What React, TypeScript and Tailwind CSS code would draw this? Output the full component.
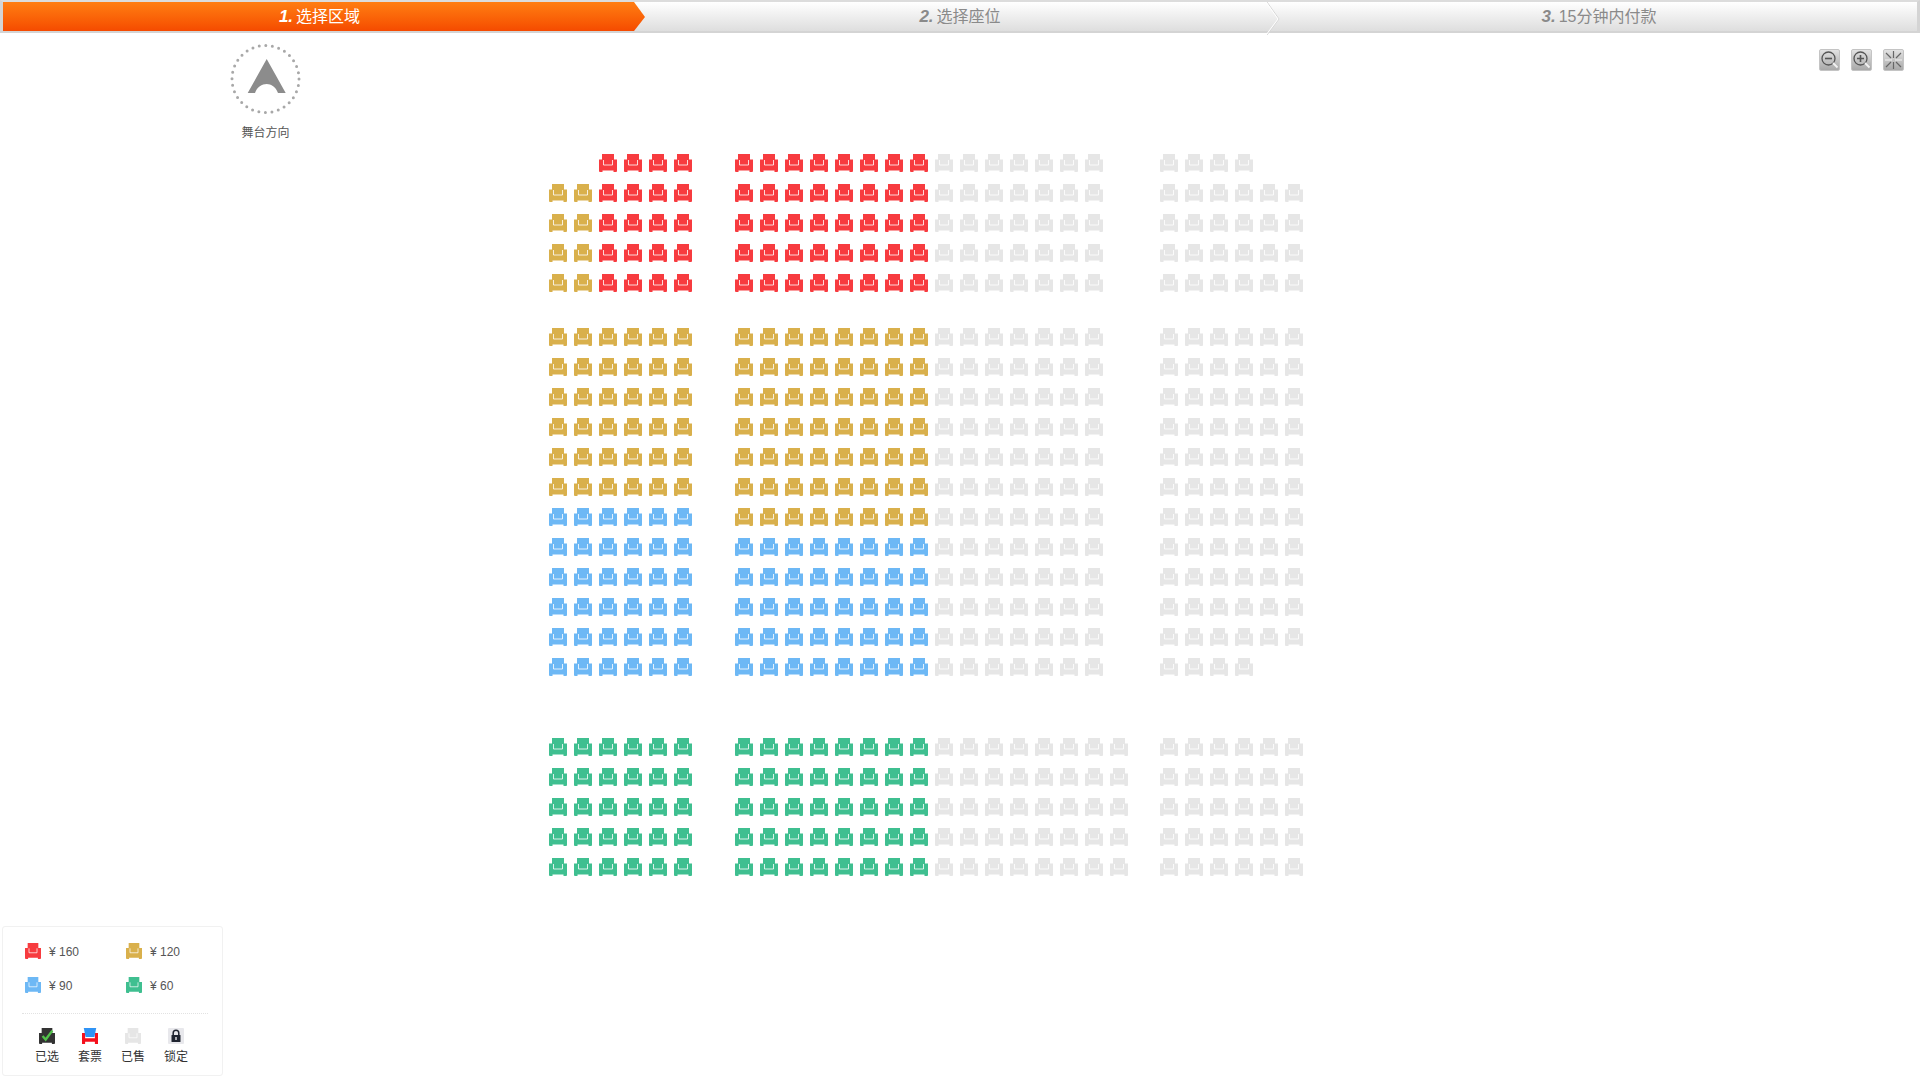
const FONT = 'font-["Liberation_Sans","Noto_Sans_CJK_SC",sans-serif]';

const RED = '#f73b3f';
const GOLD = '#d9b04c';
const BLUE = '#6db8f5';
const GREEN = '#3fbf90';
const SOLD = '#e6e6e6';

const Seat = ({ color, size = 18 }: { color: string; size?: number }) => (
    <svg width={size} height={size} viewBox="0 0 18 18" className="block shrink-0">
        <path d="M3 0h12v5.5h3V17q0 1-1 1h-2.5v-1.5h-11V18H1q-1 0-1-1V5.5h3z" fill={color} />
        <path d="M4.5 6v5h9V6" fill="none" stroke="#fff" strokeOpacity="0.8" strokeWidth="1" />
    </svg>
);

// colours for one row: left block, coloured part of the middle block
type RowSpec = {
    left: string[];
    mid: string;
    midSold?: number;
    right?: number;
};

const six = (c: string) => Array(6).fill(c) as string[];

const firstGroup: RowSpec[] = [
    { left: [RED, RED, RED, RED], mid: RED, right: 4 },
    { left: [GOLD, GOLD, RED, RED, RED, RED], mid: RED },
    { left: [GOLD, GOLD, RED, RED, RED, RED], mid: RED },
    { left: [GOLD, GOLD, RED, RED, RED, RED], mid: RED },
    { left: [GOLD, GOLD, RED, RED, RED, RED], mid: RED },
];

const secondGroup: RowSpec[] = [
    { left: six(GOLD), mid: GOLD },
    { left: six(GOLD), mid: GOLD },
    { left: six(GOLD), mid: GOLD },
    { left: six(GOLD), mid: GOLD },
    { left: six(GOLD), mid: GOLD },
    { left: six(GOLD), mid: GOLD },
    { left: six(BLUE), mid: GOLD },
    { left: six(BLUE), mid: BLUE },
    { left: six(BLUE), mid: BLUE },
    { left: six(BLUE), mid: BLUE },
    { left: six(BLUE), mid: BLUE },
    { left: six(BLUE), mid: BLUE, right: 4 },
];

const thirdGroup: RowSpec[] = Array.from({ length: 5 }, () => ({
    left: six(GREEN),
    mid: GREEN,
    midSold: 8,
}));

const SeatRow = ({ row }: { row: RowSpec }) => (
    <div className="flex">
        <div className="flex justify-end gap-[7px] w-[143px] mr-[43px]">
            {row.left.map((c, i) => <Seat key={i} color={c} />)}
        </div>
        <div className="flex gap-[7px] w-[393px] mr-[32px]">
            {Array.from({ length: 8 }).map((_, i) => <Seat key={i} color={row.mid} />)}
            {Array.from({ length: row.midSold ?? 7 }).map((_, i) => <Seat key={i} color={SOLD} />)}
        </div>
        <div className="flex gap-[7px] w-[143px]">
            {Array.from({ length: row.right ?? 6 }).map((_, i) => <Seat key={i} color={SOLD} />)}
        </div>
    </div>
);

const SeatGroup = ({ rows, className }: { rows: RowSpec[]; className?: string }) => (
    <div className={`flex flex-col gap-3 ${className ?? ''}`}>
        {rows.map((r, i) => <SeatRow key={i} row={r} />)}
    </div>
);

const Chevron = ({ className }: { className: string }) => (
    <svg width="16" height="33" viewBox="0 0 16 33" className={`absolute top-0 ${className}`}>
        <path d="M2 0l12 17L2 33" fill="none" stroke="#d6d6d6" strokeWidth="1" />
        <path d="M1 0l12 17L1 33" fill="none" stroke="#fff" strokeWidth="1" />
    </svg>
);

const Steps = () => (
    <div className="relative flex h-[33px] shrink-0 border-t-2 border-b-2 border-r-[3px] border-l-[3px] border-t-[#dcdcdc] border-b-[#d4d4d4] border-l-[#d4d4d4] border-r-[#d4d4d4] bg-gradient-to-b from-white to-[#dedede]">
        <div className="flex items-center justify-center w-[642px] shrink-0 pr-[9px] pt-px text-white text-[16px] bg-gradient-to-b from-[#ff7d12] to-[#f54a00] [clip-path:polygon(0_0,631px_0,642px_15px,631px_100%,0_100%)]">
            <b className="italic text-[17px] mr-[3px]">1.</b>选择区域
        </div>
        <div className="flex items-center justify-center w-[634px] shrink-0 pr-[4px] pt-px text-[#8a8a8a] text-[16px]">
            <b className="italic text-[17px] mr-[3px]">2.</b>选择座位
        </div>
        <Chevron className="left-[1262px]" />
        <div className="flex-1 flex items-center justify-center pl-[2px] pt-px text-[#8a8a8a] text-[16px]">
            <b className="italic text-[17px] mr-[3px]">3.</b>15分钟内付款
        </div>
    </div>
);

const StageMark = () => (
    <div className="ml-[230px] mt-[11px] w-[71px] flex flex-col items-center">
        <svg width="71" height="71" viewBox="0 0 71 71" className="block">
            <circle cx="35.5" cy="35" r="33.5" fill="none" stroke="#a8a8a8" strokeWidth="3" strokeLinecap="round" strokeDasharray="0 6.58" />
            <path d="M36.7 15L55.7 49H48C46 43 41 40 36.7 40C32 40 27 43 25 49H17.7Z" fill="#8c8c8c" />
        </svg>
        <span className="mt-[11px] text-[12px] leading-[14px] whitespace-nowrap text-[#555]">舞台方向</span>
    </div>
);

const PriceItem = ({ color, label }: { color: string; label: string }) => (
    <div className="flex items-center w-[101px] h-4 shrink-0">
        <Seat color={color} size={16} />
        <span className="ml-[8px] pt-[2px] text-[12px] leading-[14px] text-[#555]">{label}</span>
    </div>
);

const SelectedIcon = () => (
    <svg width="16" height="16" viewBox="0 0 18 18" className="block">
        <path d="M3 0h12v5.5h3V17q0 1-1 1h-2.5v-1.5h-11V18H1q-1 0-1-1V5.5h3z" fill="#333" />
        <path d="M4 9l3.5 4L15 3" fill="none" stroke="#52c24a" strokeWidth="2.6" />
    </svg>
);

const PackageIcon = () => (
    <svg width="16" height="16" viewBox="0 0 18 18" className="block">
        <path d="M0 5.5h3.5v6h11v-6H18V18h-3.5v-2.5h-11V18H0z" fill="#f5101c" />
        <path d="M2 0h14l-2 10H4z" fill="#2f93f5" />
    </svg>
);

const LockIcon = () => (
    <svg width="16" height="16" viewBox="0 0 16 16" className="block">
        <rect width="16" height="16" rx="1" fill="#e8e8ec" />
        <path d="M5.2 7V5a2.8 2.8 0 0 1 5.6 0v2" fill="none" stroke="#1f2430" strokeWidth="1.5" />
        <rect x="3.5" y="7" width="9" height="7" rx="0.5" fill="#1f2430" />
        <rect x="7.3" y="9" width="1.4" height="3" fill="#e8e8ec" />
    </svg>
);

const StatusItem = ({ icon, label }: { icon: React.ReactNode; label: string }) => (
    <div className="flex flex-col items-center w-[24px]">
        {icon}
        <span className="mt-[6px] text-[12px] leading-[15px] whitespace-nowrap text-[#333]">{label}</span>
    </div>
);

const Legend = () => (
    <div className="mt-auto mb-[4px] ml-[2px] w-[221px] h-[150px] shrink-0 border border-[#f1f1f1] rounded-[3px] pt-[16px] pl-[22px]">
        <div className="flex">
            <PriceItem color={RED} label="¥ 160" />
            <PriceItem color={GOLD} label="¥ 120" />
        </div>
        <div className="flex mt-[18px]">
            <PriceItem color={BLUE} label="¥ 90" />
            <PriceItem color={GREEN} label="¥ 60" />
        </div>
        <div className="mt-[20px] -ml-[3px] w-[186px] border-t border-dotted border-[#e2e2e2]" />
        <div className="flex gap-[19px] mt-[14px] ml-[10px]">
            <StatusItem icon={<SelectedIcon />} label="已选" />
            <StatusItem icon={<PackageIcon />} label="套票" />
            <StatusItem icon={<Seat color={SOLD} size={16} />} label="已售" />
            <StatusItem icon={<LockIcon />} label="锁定" />
        </div>
    </div>
);

const ZoomButton = ({ children }: { children: React.ReactNode }) => (
    <div className="w-[21px] h-[22px] rounded-[2px] bg-gradient-to-b from-[#e2e2e2] to-[#a9a9a9] border border-[#c4c4c4]">
        <svg width="19" height="20" viewBox="0 0 19 20" fill="none" stroke="#555" className="block">
            {children}
        </svg>
    </div>
);

const ZoomControls = () => (
    <div className="flex justify-end gap-[11px] pt-[16px] pr-[16px]">
        <ZoomButton>
            <circle cx="8.5" cy="8.5" r="6.5" strokeWidth="1.3" />
            <path d="M5 8.5h7" strokeWidth="1.6" />
            <path d="M13 13l4.5 4.5" stroke="#f2f2f2" strokeWidth="1.8" />
        </ZoomButton>
        <ZoomButton>
            <circle cx="8.5" cy="8.5" r="6.5" strokeWidth="1.3" />
            <path d="M5 8.5h7M8.5 5v7" strokeWidth="1.6" />
            <path d="M13 13l4.5 4.5" stroke="#f2f2f2" strokeWidth="1.8" />
        </ZoomButton>
        <ZoomButton>
            <path d="M1 10h7M11 10h7" stroke="#f4f4f4" strokeWidth="1.2" />
            <path d="M9.5 1v7M9.5 12v7" stroke="#666" strokeWidth="1.2" />
            <path d="M2 3l5 5M17 3l-5 5M2 17l5-5M17 17l-5-5" stroke="#666" strokeWidth="1.2" />
        </ZoomButton>
    </div>
);

export default function App() {
    return (
        <div className={`w-[1920px] h-[1080px] flex flex-col overflow-hidden bg-white ${FONT}`}>
            <Steps />
            <div className="flex-1 flex min-h-0">
                <div className="w-[549px] shrink-0 flex flex-col">
                    <StageMark />
                    <Legend />
                </div>
                <div className="w-[754px] shrink-0 pt-[121px]">
                    <SeatGroup rows={firstGroup} />
                    <SeatGroup rows={secondGroup} className="mt-[36px]" />
                    <SeatGroup rows={thirdGroup} className="mt-[62px]" />
                </div>
                <div className="flex-1">
                    <ZoomControls />
                </div>
            </div>
        </div>
    );
}
